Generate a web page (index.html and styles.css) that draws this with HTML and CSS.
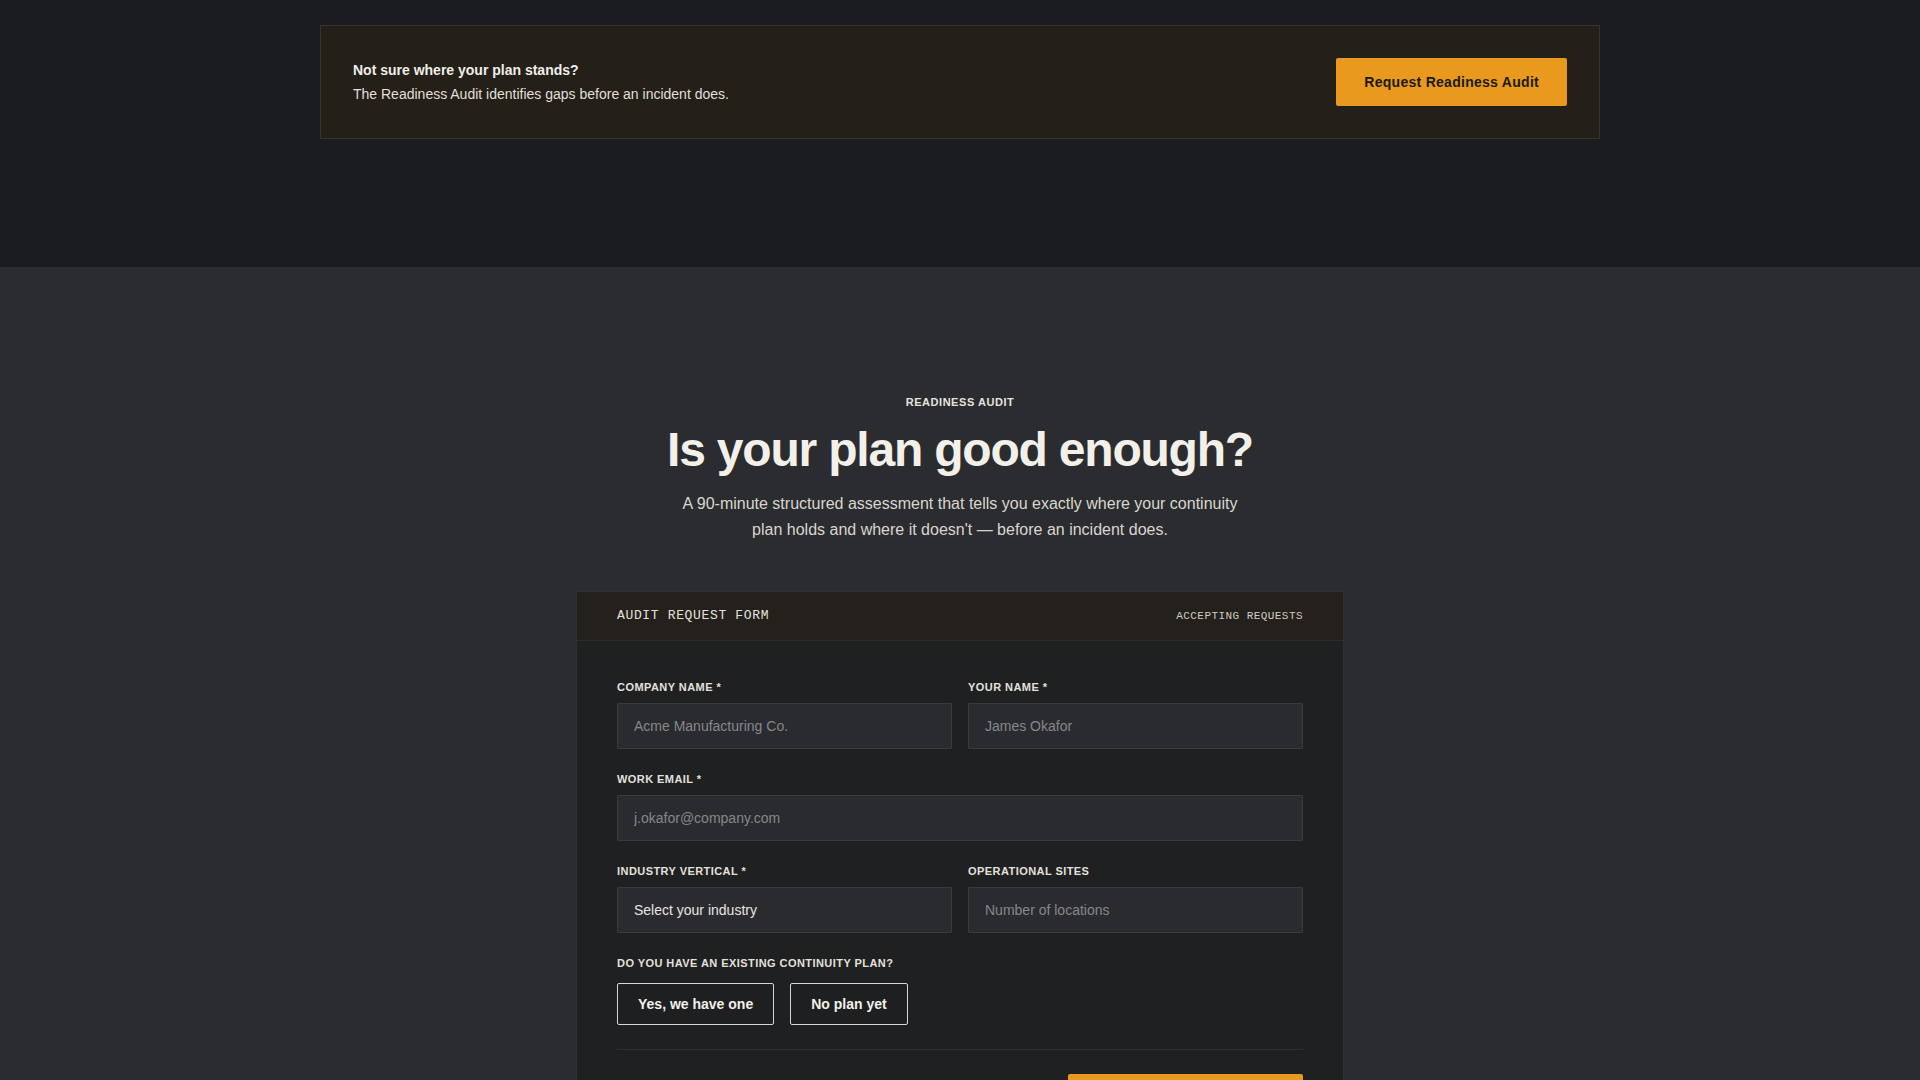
FILE: index.html
```html
<!DOCTYPE html>
<html lang="en">
<head>
<meta charset="utf-8">
<title>Readiness Audit</title>
<link rel="stylesheet" href="styles.css">
</head>
<body>
<section class="top">
  <div class="banner">
    <div class="banner-text">
      <p class="banner-title">Not sure where your plan stands?</p>
      <p class="banner-sub">The Readiness Audit identifies gaps before an incident does.</p>
    </div>
    <a class="btn-primary" href="#audit">Request Readiness Audit</a>
  </div>
</section>

<section class="audit" id="audit">
  <p class="eyebrow">READINESS AUDIT</p>
  <h1 class="headline">Is your plan good enough?</h1>
  <p class="lede">A 90-minute structured assessment that tells you exactly where your continuity plan holds and where it doesn't — before an incident does.</p>

  <form class="form-card">
    <div class="form-head">
      <span class="form-title">AUDIT REQUEST FORM</span>
      <span class="form-status">ACCEPTING REQUESTS</span>
    </div>
    <div class="form-body">
      <div class="grid">
        <label class="field">
          <span class="label">COMPANY NAME *</span>
          <input class="input" type="text" placeholder="Acme Manufacturing Co.">
        </label>
        <label class="field">
          <span class="label">YOUR NAME *</span>
          <input class="input" type="text" placeholder="James Okafor">
        </label>
        <label class="field span-2">
          <span class="label">WORK EMAIL *</span>
          <input class="input" type="email" placeholder="j.okafor@company.com">
        </label>
        <label class="field">
          <span class="label">INDUSTRY VERTICAL *</span>
          <select class="input select">
            <option>Select your industry</option>
          </select>
        </label>
        <label class="field">
          <span class="label">OPERATIONAL SITES</span>
          <input class="input" type="text" placeholder="Number of locations">
        </label>
        <div class="field span-2">
          <span class="label">DO YOU HAVE AN EXISTING CONTINUITY PLAN?</span>
          <div class="choices">
            <button type="button" class="choice">Yes, we have one</button>
            <button type="button" class="choice">No plan yet</button>
          </div>
        </div>
      </div>
      <div class="form-foot">
        <button type="submit" class="btn-primary">Request Readiness Audit</button>
      </div>
    </div>
  </form>
</section>
</body>
</html>
```

FILE: styles.css
```css
* { box-sizing: border-box; }

html, body {
  margin: 0;
  padding: 0;
}

body {
  font-family: "Liberation Sans", Arial, sans-serif;
  background: #2b2c2f;
  color: #ece9e4;
}

p { margin: 0; }

.top {
  background: #1b1c1f;
  padding: 25px 0 128px;
}

.banner {
  width: 1280px;
  margin: 0 auto;
  background: #231f19;
  border: 1px solid #3b3324;
  padding: 32px;
  display: flex;
  align-items: center;
  justify-content: space-between;
}

.banner-title {
  font-size: 14px;
  font-weight: 700;
  line-height: 20px;
  color: #f1eee9;
  margin-bottom: 4px;
}

.banner-sub {
  font-size: 14px;
  line-height: 20px;
  color: #e2dfd9;
}

.btn-primary {
  display: inline-block;
  background: #e8991e;
  color: #1c1a16;
  font-family: "Liberation Sans", Arial, sans-serif;
  font-size: 14px;
  font-weight: 700;
  letter-spacing: 0.02em;
  line-height: 16px;
  padding: 16px 28px;
  border: 0;
  border-radius: 2px;
  text-decoration: none;
  cursor: pointer;
}

.audit {
  padding: 127px 0 120px;
  display: flex;
  flex-direction: column;
  align-items: center;
  text-align: center;
}

.eyebrow {
  font-size: 11px;
  font-weight: 700;
  letter-spacing: 0.05em;
  line-height: 16px;
  color: #e6e3de;
}

.headline {
  margin: 13px 0 0;
  font-size: 48px;
  line-height: 54px;
  font-weight: 700;
  letter-spacing: -0.025em;
  color: #f3f0ea;
}

.lede {
  margin-top: 14px;
  max-width: 570px;
  font-size: 16px;
  line-height: 26px;
  color: #d9d6d0;
}

.form-card {
  margin-top: 48px;
  width: 768px;
  text-align: left;
  background: #1f2022;
  border: 1px solid #2f3033;
}

.form-head {
  display: flex;
  align-items: center;
  justify-content: space-between;
  padding: 16px 40px;
  background: #24211c;
  border-bottom: 1px solid #2f2c27;
  line-height: 16px;
}

.form-title {
  font-family: "Liberation Mono", "DejaVu Sans Mono", monospace;
  font-size: 13px;
  letter-spacing: 0.05em;
  color: #e4e1dc;
}

.form-status {
  font-family: "Liberation Mono", "DejaVu Sans Mono", monospace;
  font-size: 11px;
  letter-spacing: 0.04em;
  color: #cfccc6;
}

.form-body {
  padding: 38px 40px 40px;
}

.grid {
  display: grid;
  grid-template-columns: 1fr 1fr;
  column-gap: 16px;
  row-gap: 22px;
}

.field {
  display: flex;
  flex-direction: column;
}

.span-2 { grid-column: span 2; }

.label {
  font-size: 11px;
  font-weight: 700;
  letter-spacing: 0.04em;
  line-height: 16px;
  color: #e4e1dc;
  margin-bottom: 8px;
}

.input {
  height: 46px;
  width: 100%;
  background: #2a2b2e;
  border: 1px solid #3a3b3e;
  border-radius: 1px;
  padding: 0 16px;
  font-family: "Liberation Sans", Arial, sans-serif;
  font-size: 14px;
  color: #e6e3de;
  outline: none;
}

.input::placeholder {
  color: #86878b;
}

.select {
  appearance: none;
  -webkit-appearance: none;
  color: #e8e5e0;
}

.choices {
  display: flex;
  gap: 16px;
  margin-top: 4px;
}

.choice {
  background: #1e1f21;
  border: 1px solid #d8d6d2;
  border-radius: 2px;
  color: #f3f0ea;
  font-family: "Liberation Sans", Arial, sans-serif;
  font-size: 14px;
  font-weight: 700;
  line-height: 18px;
  padding: 11px 20px;
  cursor: pointer;
}

.form-foot {
  margin-top: 24px;
  padding-top: 24px;
  border-top: 1px solid #2e2f32;
  display: flex;
  justify-content: flex-end;
}

.form-foot .btn-primary {
  padding: 16px 30px;
}
```
